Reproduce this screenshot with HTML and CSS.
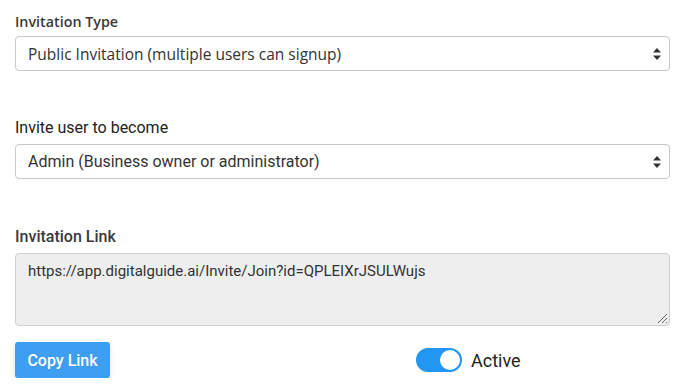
FILE: index.html
```html
<!DOCTYPE html>
<html>
<head>
<meta charset="utf-8">
<link rel="stylesheet" href="styles.css">
</head>
<body>
<div class="form">
  <div class="field">
    <div class="label label-os">Invitation Type</div>
    <div class="select select-os">
      <span>Public Invitation (multiple users can signup)</span>
      <svg class="arrows" width="8" height="12" viewBox="0 0 8 12"><path d="M4 0 L8 4.5 L0 4.5 Z M0 7.5 L8 7.5 L4 12 Z" fill="#333"/></svg>
    </div>
  </div>
  <div class="field field-2">
    <div class="label">Invite user to become</div>
    <div class="select">
      <span>Admin (Business owner or administrator)</span>
      <svg class="arrows" width="8" height="12" viewBox="0 0 8 12"><path d="M4 0 L8 4.5 L0 4.5 Z M0 7.5 L8 7.5 L4 12 Z" fill="#333"/></svg>
    </div>
  </div>
  <div class="field field-3">
    <div class="label label-md">Invitation Link</div>
    <div class="textarea">https://app.digitalguide.ai/Invite/Join?id=QPLEIXrJSULWujs</div>
  </div>
  <div class="actions">
    <button class="btn">Copy Link</button>
    <div class="toggle-wrap">
      <span class="toggle"><span class="knob"></span></span>
      <span class="toggle-label">Active</span>
    </div>
  </div>
</div>
</body>
</html>
```
FILE: styles.css
```css
* { box-sizing: border-box; }
html, body { margin: 0; padding: 0; background: #fff; }
body { font-family: Roboto, "Liberation Sans", sans-serif; color: #222; }
.form { width: 670px; padding: 11px 0 0 15px; display: flex; flex-direction: column; }
.field { display: flex; flex-direction: column; }
.field-2 { margin-top: 48px; }
.field-3 { margin-top: 49px; }
.label { font-size: 16px; line-height: 18px; height: 25px; color: #222; }
.label-os { font-family: "Open Sans", sans-serif; font-size: 14.3px; line-height: 21px; font-weight: 600; color: #3a3a3a; }
.label-md { font-weight: 500; color: #3a3a3a; }
.select {
  height: 35px; border: 1px solid #c8c8c8; border-radius: 4px;
  display: flex; align-items: center; justify-content: space-between;
  padding: 0 8px 0 12px; font-size: 16px; color: #333;
}
.select-os { font-family: "Open Sans", sans-serif; font-size: 15.5px; }
.arrows { display: block; }
.textarea {
  position: relative; height: 73px; background: #eeeeee; border: 1px solid #cfcfcf;
  border-radius: 4px; padding: 7px 12px; font-size: 15px; line-height: 20px; color: #333;
}
.textarea::after {
  content: ""; position: absolute; right: 2px; bottom: 2px; width: 12px; height: 12px;
  background: repeating-linear-gradient(135deg, transparent 0 1.6px, #666 1.6px 2.8px);
  clip-path: polygon(100% 0, 100% 100%, 0 100%);
}
.actions { display: grid; grid-template-columns: 401px auto; align-items: center; margin-top: 16px; }
.btn {
  width: 95px; height: 36px; border: none; border-radius: 3px; background: #3d9ef2;
  color: #fff; font-family: Roboto, sans-serif; font-size: 16px; font-weight: 500;
  box-shadow: 0 2px 5px rgba(0,0,0,0.15);
  justify-self: start;
}
.toggle-wrap { display: flex; align-items: center; gap: 9px; }
.toggle {
  width: 46px; height: 24px; border-radius: 12px; background: #2196f3;
  display: flex; align-items: center; justify-content: flex-end; padding: 2px;
}
.knob { width: 20px; height: 20px; border-radius: 50%; background: #fff; }
.toggle-label { font-size: 18px; color: #222; }
```
